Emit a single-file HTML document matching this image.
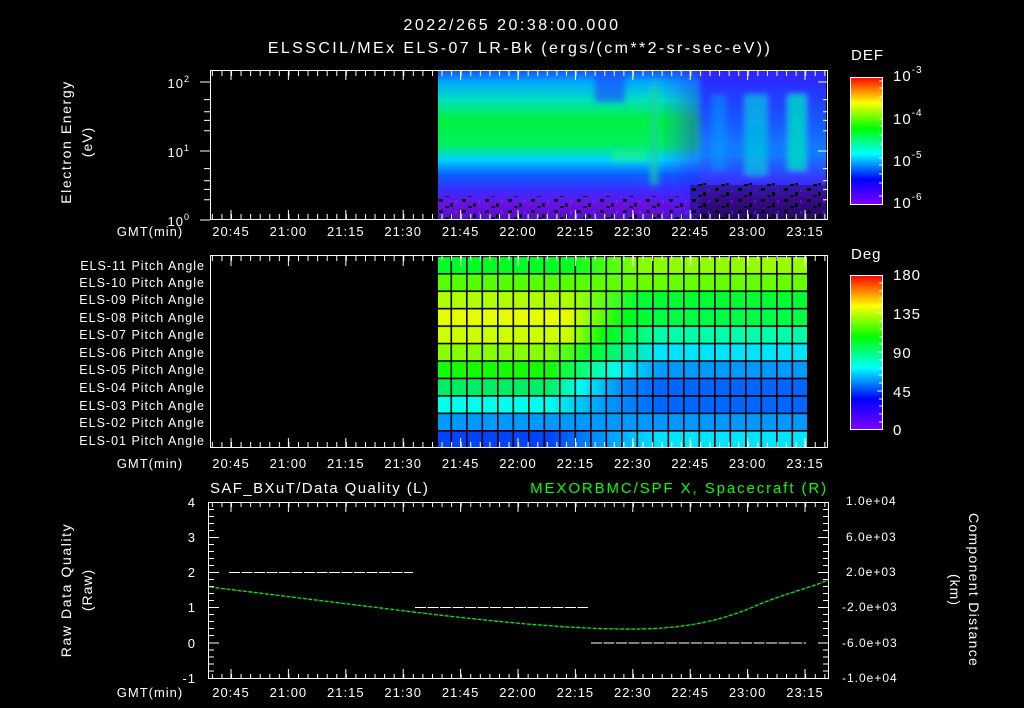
<!DOCTYPE html>
<html><head><meta charset="utf-8"><style>
html,body{margin:0;padding:0;background:#000;width:1024px;height:708px;overflow:hidden}
svg{display:block}
text{font-family:"Liberation Sans",sans-serif;fill:#fff;letter-spacing:1px}
</style></head><body>
<svg width="1024" height="708" viewBox="0 0 1024 708" xmlns="http://www.w3.org/2000/svg">
<defs>
 <clipPath id="specClip"><rect x="438" y="71" width="388" height="149"/></clipPath>
 <pattern id="tminT" patternUnits="userSpaceOnUse" x="231" y="0" width="9.57" height="708"><rect x="0" y="0" width="1" height="708" fill="#fff"/></pattern>
 <pattern id="gridV" patternUnits="userSpaceOnUse" x="450.5" y="0" width="15.5" height="708"><rect x="0" y="0" width="1.6" height="708" fill="#000"/></pattern>
 <pattern id="gridH" patternUnits="userSpaceOnUse" x="0" y="255.5" width="1024" height="17.45"><rect x="0" y="0" width="1024" height="1.6" fill="#000"/></pattern>
 <pattern id="speck" patternUnits="userSpaceOnUse" x="0" y="0" width="23" height="11"><rect x="2" y="1" width="4" height="3" fill="#000"/><rect x="13" y="5" width="3" height="4" fill="#000"/><rect x="8" y="8" width="4" height="2" fill="#000"/><rect x="18" y="2" width="2" height="3" fill="#7a20ff"/></pattern>
 <linearGradient id="specV" x1="0" y1="70" x2="0" y2="220" gradientUnits="userSpaceOnUse">
  <stop offset="0" stop-color="#1a4dff"/><stop offset="0.08" stop-color="#00a8ff"/>
  <stop offset="0.2" stop-color="#00e0c0"/><stop offset="0.33" stop-color="#00f040"/>
  <stop offset="0.5" stop-color="#00f060"/><stop offset="0.6" stop-color="#00d0ff"/>
  <stop offset="0.7" stop-color="#0a60ff"/><stop offset="0.8" stop-color="#3a2dff"/>
  <stop offset="0.9" stop-color="#6a10e0"/><stop offset="1" stop-color="#5010c0"/>
 </linearGradient>
 <linearGradient id="specR" x1="0" y1="70" x2="0" y2="220" gradientUnits="userSpaceOnUse">
  <stop offset="0" stop-color="#3020ff"/><stop offset="0.3" stop-color="#1a50ff"/><stop offset="0.55" stop-color="#1080ff"/>
  <stop offset="0.75" stop-color="#3a2dff"/><stop offset="0.85" stop-color="#5510d0"/><stop offset="1" stop-color="#300880"/>
 </linearGradient>
 <linearGradient id="fadeL" x1="0" x2="1"><stop offset="0" stop-color="#3020ff" stop-opacity="0"/><stop offset="1" stop-color="#3020ff" stop-opacity="1"/></linearGradient>
 <linearGradient id="defbar" x1="0" y1="205" x2="0" y2="77" gradientUnits="userSpaceOnUse">
  <stop offset="0" stop-color="#8000ff"/><stop offset="0.2" stop-color="#0000ff"/><stop offset="0.4" stop-color="#00ffff"/><stop offset="0.6" stop-color="#00ff00"/><stop offset="0.8" stop-color="#ffff00"/><stop offset="1" stop-color="#ff0000"/>
 </linearGradient>
 <linearGradient id="degbar" x1="0" y1="430" x2="0" y2="275" gradientUnits="userSpaceOnUse">
  <stop offset="0" stop-color="#8000ff"/><stop offset="0.2" stop-color="#0000ff"/><stop offset="0.4" stop-color="#00ffff"/><stop offset="0.6" stop-color="#00ff00"/><stop offset="0.8" stop-color="#ffff00"/><stop offset="1" stop-color="#ff0000"/>
 </linearGradient>
 <linearGradient id="r1" x1="438" x2="808" gradientUnits="userSpaceOnUse"><stop offset="0.35" stop-color="#00ff22"/><stop offset="0.55" stop-color="#88ff00"/><stop offset="1" stop-color="#99ff00"/></linearGradient>
 <linearGradient id="r2" x1="438" x2="808" gradientUnits="userSpaceOnUse"><stop offset="0.35" stop-color="#55ff00"/><stop offset="0.55" stop-color="#66ff00"/></linearGradient>
 <linearGradient id="r3" x1="438" x2="808" gradientUnits="userSpaceOnUse"><stop offset="0.35" stop-color="#b0ff00"/><stop offset="0.55" stop-color="#00ff33"/></linearGradient>
 <linearGradient id="r4" x1="438" x2="808" gradientUnits="userSpaceOnUse"><stop offset="0.35" stop-color="#e6ff00"/><stop offset="0.5" stop-color="#00ff10"/><stop offset="0.6" stop-color="#00ff44"/></linearGradient>
 <linearGradient id="r5" x1="438" x2="808" gradientUnits="userSpaceOnUse"><stop offset="0.35" stop-color="#ccff00"/><stop offset="0.45" stop-color="#00ff10"/><stop offset="0.6" stop-color="#00ffaa"/></linearGradient>
 <linearGradient id="r6" x1="438" x2="808" gradientUnits="userSpaceOnUse"><stop offset="0.3" stop-color="#88ff00"/><stop offset="0.42" stop-color="#00ff30"/><stop offset="0.6" stop-color="#00e5ff"/></linearGradient>
 <linearGradient id="r7" x1="438" x2="808" gradientUnits="userSpaceOnUse"><stop offset="0.3" stop-color="#11ff00"/><stop offset="0.48" stop-color="#00ffee"/><stop offset="0.6" stop-color="#0099ff"/></linearGradient>
 <linearGradient id="r8" x1="438" x2="808" gradientUnits="userSpaceOnUse"><stop offset="0.3" stop-color="#00ee66"/><stop offset="0.38" stop-color="#00ffee"/><stop offset="0.5" stop-color="#0088ff"/><stop offset="0.6" stop-color="#0066ff"/></linearGradient>
 <linearGradient id="r9" x1="438" x2="808" gradientUnits="userSpaceOnUse"><stop offset="0.3" stop-color="#00ffee"/><stop offset="0.45" stop-color="#0099ff"/><stop offset="0.6" stop-color="#0066ff"/></linearGradient>
 <linearGradient id="r10" x1="438" x2="808" gradientUnits="userSpaceOnUse"><stop offset="0" stop-color="#0099ff"/><stop offset="1" stop-color="#0099ff"/></linearGradient>
 <linearGradient id="r11" x1="438" x2="808" gradientUnits="userSpaceOnUse"><stop offset="0.3" stop-color="#0044ff"/><stop offset="0.45" stop-color="#0099ff"/><stop offset="0.6" stop-color="#00e5ff"/></linearGradient>
 <filter id="blur3"><feGaussianBlur stdDeviation="3"/></filter>
</defs>

<text x="512" y="30" font-size="16" text-anchor="middle" style="letter-spacing:2.5px">2022/265 20:38:00.000</text>
<text x="520" y="53" font-size="16" text-anchor="middle" style="letter-spacing:2.4px">ELSSCIL/MEx ELS-07 LR-Bk  (ergs/(cm**2-sr-sec-eV))</text>

<!-- Panel 1 -->
<g clip-path="url(#specClip)">
<rect x="438" y="70" width="390" height="150" fill="url(#specV)"/>
<g filter="url(#blur3)">
 <rect x="660" y="60" width="50" height="170" fill="url(#fadeL)" opacity="0.6"/>
 <rect x="700" y="60" width="140" height="170" fill="url(#specR)"/>
 <rect x="595" y="72" width="30" height="30" fill="#1a40ff" opacity="0.6"/>
 <rect x="650" y="85" width="8" height="100" fill="#20d0a0" opacity="0.7"/>
 <rect x="745" y="95" width="22" height="80" fill="#00c8e0" opacity="0.7"/>
 <rect x="788" y="95" width="18" height="75" fill="#00e0c0" opacity="0.8"/>
 <rect x="712" y="95" width="14" height="75" fill="#00a0ff" opacity="0.5"/>
 <rect x="612" y="150" width="35" height="12" fill="#20ff70" opacity="0.5"/>
</g>
<rect x="438" y="196" width="390" height="24" fill="url(#speck)" opacity="0.8"/>
<rect x="690" y="183" width="136" height="37" fill="url(#speck)"/>
<rect x="690" y="185" width="136" height="35" fill="#000" opacity="0.3"/>
</g>
<rect x="210.5" y="70.5" width="617" height="149" fill="none" stroke="#fff"/>
<rect x="211" y="71" width="617" height="5" fill="url(#tminT)"/>
<rect x="211" y="214" width="617" height="5" fill="url(#tminT)"/>
<g stroke="#fff" stroke-width="1">
 <path d="M231 70v10M288.4 70v10M345.8 70v10M403.2 70v10M460.6 70v10M518 70v10M575.4 70v10M632.8 70v10M690.2 70v10M747.6 70v10M805 70v10"/>
 <path d="M231 220v-10M288.4 220v-10M345.8 220v-10M403.2 220v-10M460.6 220v-10M518 220v-10M575.4 220v-10M632.8 220v-10M690.2 220v-10M747.6 220v-10M805 220v-10"/>
 <path d="M200 82h10M200 151h10M200 220h10"/>
 <path d="M204 99.6h6M204 111.7h6M204 120.4h6M204 130.8h6M204 168.6h6M204 180.7h6M204 189.4h6M204 199.8h6"/>
 <path d="M828 82h-10M828 151h-10M828 99.6h-5M828 111.7h-5M828 120.4h-5M828 130.8h-5M828 168.6h-5M828 180.7h-5M828 189.4h-5M828 199.8h-5"/>
</g>
<text x="190" y="88" font-size="13" text-anchor="end">10<tspan font-size="9" dy="-6">2</tspan></text>
<text x="190" y="157" font-size="13" text-anchor="end">10<tspan font-size="9" dy="-6">1</tspan></text>
<text x="190" y="226" font-size="13" text-anchor="end">10<tspan font-size="9" dy="-6">0</tspan></text>
<text transform="translate(71,142) rotate(-90)" font-size="14" text-anchor="middle" style="letter-spacing:1.6px">Electron Energy</text>
<text transform="translate(92,142) rotate(-90)" font-size="14" text-anchor="middle">(eV)</text>

<g font-size="13" text-anchor="middle">
<text x="150" y="236">GMT(min)</text>
<text x="231" y="236">20:45</text><text x="288.4" y="236">21:00</text><text x="345.8" y="236">21:15</text><text x="403.2" y="236">21:30</text><text x="460.6" y="236">21:45</text><text x="518" y="236">22:00</text><text x="575.4" y="236">22:15</text><text x="632.8" y="236">22:30</text><text x="690.2" y="236">22:45</text><text x="747.6" y="236">23:00</text><text x="805" y="236">23:15</text>
</g>

<text x="851" y="60" font-size="15">DEF</text>
<rect x="850.5" y="77.5" width="32" height="127" fill="url(#defbar)" stroke="#fff"/>
<g stroke="#fff"><path d="M883 81h-4M883 88h-4M883 97h-4M883 106h-4M883 119h-4M883 126h-4M883 135h-4M883 144h-4M883 158h-4M883 165h-4M883 174h-4M883 183h-4M883 196h-4"/></g>
<g font-size="15">
<text x="893" y="81">10<tspan font-size="10" dy="-8">-3</tspan></text>
<text x="893" y="124">10<tspan font-size="10" dy="-8">-4</tspan></text>
<text x="893" y="166">10<tspan font-size="10" dy="-8">-5</tspan></text>
<text x="893" y="208">10<tspan font-size="10" dy="-8">-6</tspan></text>
</g>

<!-- Panel 2 -->
<rect x="438" y="256" width="370" height="17.45" fill="url(#r1)"/>
<rect x="438" y="273.45" width="370" height="17.45" fill="url(#r2)"/>
<rect x="438" y="290.9" width="370" height="17.45" fill="url(#r3)"/>
<rect x="438" y="308.35" width="370" height="17.45" fill="url(#r4)"/>
<rect x="438" y="325.8" width="370" height="17.45" fill="url(#r5)"/>
<rect x="438" y="343.25" width="370" height="17.45" fill="url(#r6)"/>
<rect x="438" y="360.7" width="370" height="17.45" fill="url(#r7)"/>
<rect x="438" y="378.15" width="370" height="17.45" fill="url(#r8)"/>
<rect x="438" y="395.6" width="370" height="17.45" fill="url(#r9)"/>
<rect x="438" y="413.05" width="370" height="17.45" fill="url(#r10)"/>
<rect x="438" y="430.5" width="370" height="17.5" fill="url(#r11)"/>
<rect x="438" y="256" width="370" height="192" fill="url(#gridV)"/>
<rect x="438" y="256" width="370" height="192" fill="url(#gridH)"/>
<rect x="210.5" y="255.5" width="617" height="192" fill="none" stroke="#fff"/>
<rect x="211" y="256" width="617" height="5" fill="url(#tminT)"/>
<rect x="211" y="442" width="617" height="5" fill="url(#tminT)"/>
<g stroke="#fff">
 <path d="M231 256v10M288.4 256v10M345.8 256v10M403.2 256v10M460.6 256v10M518 256v10M575.4 256v10M632.8 256v10M690.2 256v10M747.6 256v10M805 256v10"/>
 <path d="M231 448v-10M288.4 448v-10M345.8 448v-10M403.2 448v-10M460.6 448v-10M518 448v-10M575.4 448v-10M632.8 448v-10M690.2 448v-10M747.6 448v-10M805 448v-10"/>
</g>
<g font-size="12.5" text-anchor="end" style="letter-spacing:1.5px">
<text x="205" y="270">ELS-11 Pitch Angle</text>
<text x="205" y="287">ELS-10 Pitch Angle</text>
<text x="205" y="304">ELS-09 Pitch Angle</text>
<text x="205" y="322">ELS-08 Pitch Angle</text>
<text x="205" y="339">ELS-07 Pitch Angle</text>
<text x="205" y="357">ELS-06 Pitch Angle</text>
<text x="205" y="374">ELS-05 Pitch Angle</text>
<text x="205" y="392">ELS-04 Pitch Angle</text>
<text x="205" y="410">ELS-03 Pitch Angle</text>
<text x="205" y="427">ELS-02 Pitch Angle</text>
<text x="205" y="445">ELS-01 Pitch Angle</text>
</g>
<g font-size="13" text-anchor="middle">
<text x="150" y="468">GMT(min)</text>
<text x="231" y="468">20:45</text><text x="288.4" y="468">21:00</text><text x="345.8" y="468">21:15</text><text x="403.2" y="468">21:30</text><text x="460.6" y="468">21:45</text><text x="518" y="468">22:00</text><text x="575.4" y="468">22:15</text><text x="632.8" y="468">22:30</text><text x="690.2" y="468">22:45</text><text x="747.6" y="468">23:00</text><text x="805" y="468">23:15</text>
</g>

<text x="851" y="259" font-size="15">Deg</text>
<rect x="850.5" y="275.5" width="32" height="154" fill="url(#degbar)" stroke="#fff"/>
<g stroke="#fff"><path d="M883 283h-4M883 291h-4M883 298h-4M883 306h-4M883 321h-4M883 329h-4M883 337h-4M883 344h-4M883 360h-4M883 368h-4M883 375h-4M883 383h-4M883 399h-4M883 406h-4M883 414h-4M883 422h-4M883 313h-6M883 352h-6M883 391h-6"/></g>
<g font-size="15">
<text x="893" y="280">180</text>
<text x="893" y="319">135</text>
<text x="893" y="358">90</text>
<text x="893" y="397">45</text>
<text x="893" y="435">0</text>
</g>

<!-- Panel 3 -->
<text x="210" y="493" font-size="15" style="letter-spacing:1.4px">SAF_BXuT/Data Quality (L)</text>
<text x="828" y="493" font-size="15" text-anchor="end" style="fill:#00ff00;letter-spacing:1.9px">MEXORBMC/SPF X, Spacecraft (R)</text>
<rect x="208.5" y="502.5" width="620" height="176" fill="none" stroke="#fff"/>
<rect x="211" y="503" width="617" height="4" fill="url(#tminT)"/>
<rect x="211" y="674" width="617" height="4" fill="url(#tminT)"/>
<g stroke="#fff">
 <path d="M231 503v9M288.4 503v9M345.8 503v9M403.2 503v9M460.6 503v9M518 503v9M575.4 503v9M632.8 503v9M690.2 503v9M747.6 503v9M805 503v9"/>
 <path d="M231 678v-9M288.4 678v-9M345.8 678v-9M403.2 678v-9M460.6 678v-9M518 678v-9M575.4 678v-9M632.8 678v-9M690.2 678v-9M747.6 678v-9M805 678v-9"/>
 <path d="M209 537.5h10M209 572.5h10M209 607.5h10M209 643h10"/>
 <path d="M209 509.5h5M209 516.5h5M209 523.5h5M209 530.5h5M209 544.5h5M209 551.5h5M209 558.5h5M209 565.5h5M209 579.5h5M209 586.5h5M209 593.5h5M209 600.5h5M209 614.5h5M209 621.5h5M209 628.5h5M209 635.5h5M209 650h5M209 657h5M209 664h5M209 671h5"/>
 <path d="M828 537.5h-10M828 572.5h-10M828 607.5h-10M828 643h-10"/>
 <path d="M828 509.5h-5M828 516.5h-5M828 523.5h-5M828 530.5h-5M828 544.5h-5M828 551.5h-5M828 558.5h-5M828 565.5h-5M828 579.5h-5M828 586.5h-5M828 593.5h-5M828 600.5h-5M828 614.5h-5M828 621.5h-5M828 628.5h-5M828 635.5h-5M828 650h-5M828 657h-5M828 664h-5M828 671h-5"/>
 <path d="M229 572.5H413M415 607.5H588M591 643H806" stroke-dasharray="11 1.5"/>
</g>
<path d="M210 587 C300 598 380 608 430 614 C500 622 560 628 620 629 C680 630 720 622 760 604 C790 592 810 588 828 580" fill="none" stroke="#00ee00" stroke-width="1.3" stroke-dasharray="4 1.5"/>
<g font-size="13" text-anchor="end">
<text x="196" y="507">4</text><text x="196" y="542">3</text><text x="196" y="577">2</text><text x="196" y="612">1</text><text x="196" y="648">0</text><text x="196" y="683">-1</text>
</g>
<g font-size="12">
<text x="846" y="505">1.0e+04</text><text x="846" y="541">6.0e+03</text><text x="846" y="576">2.0e+03</text><text x="842" y="611">-2.0e+03</text><text x="842" y="647">-6.0e+03</text><text x="842" y="682">-1.0e+04</text>
</g>
<text transform="translate(71,590) rotate(-90)" font-size="14" text-anchor="middle" style="letter-spacing:1.6px">Raw Data Quality</text>
<text transform="translate(92,590) rotate(-90)" font-size="14" text-anchor="middle">(Raw)</text>
<text transform="translate(969,590) rotate(90)" font-size="14" text-anchor="middle" style="letter-spacing:1.3px">Component Distance</text>
<text transform="translate(950,590) rotate(90)" font-size="14" text-anchor="middle">(km)</text>
<g font-size="13" text-anchor="middle">
<text x="150" y="697">GMT(min)</text>
<text x="231" y="697">20:45</text><text x="288.4" y="697">21:00</text><text x="345.8" y="697">21:15</text><text x="403.2" y="697">21:30</text><text x="460.6" y="697">21:45</text><text x="518" y="697">22:00</text><text x="575.4" y="697">22:15</text><text x="632.8" y="697">22:30</text><text x="690.2" y="697">22:45</text><text x="747.6" y="697">23:00</text><text x="805" y="697">23:15</text>
</g>
</svg>
</body></html>
